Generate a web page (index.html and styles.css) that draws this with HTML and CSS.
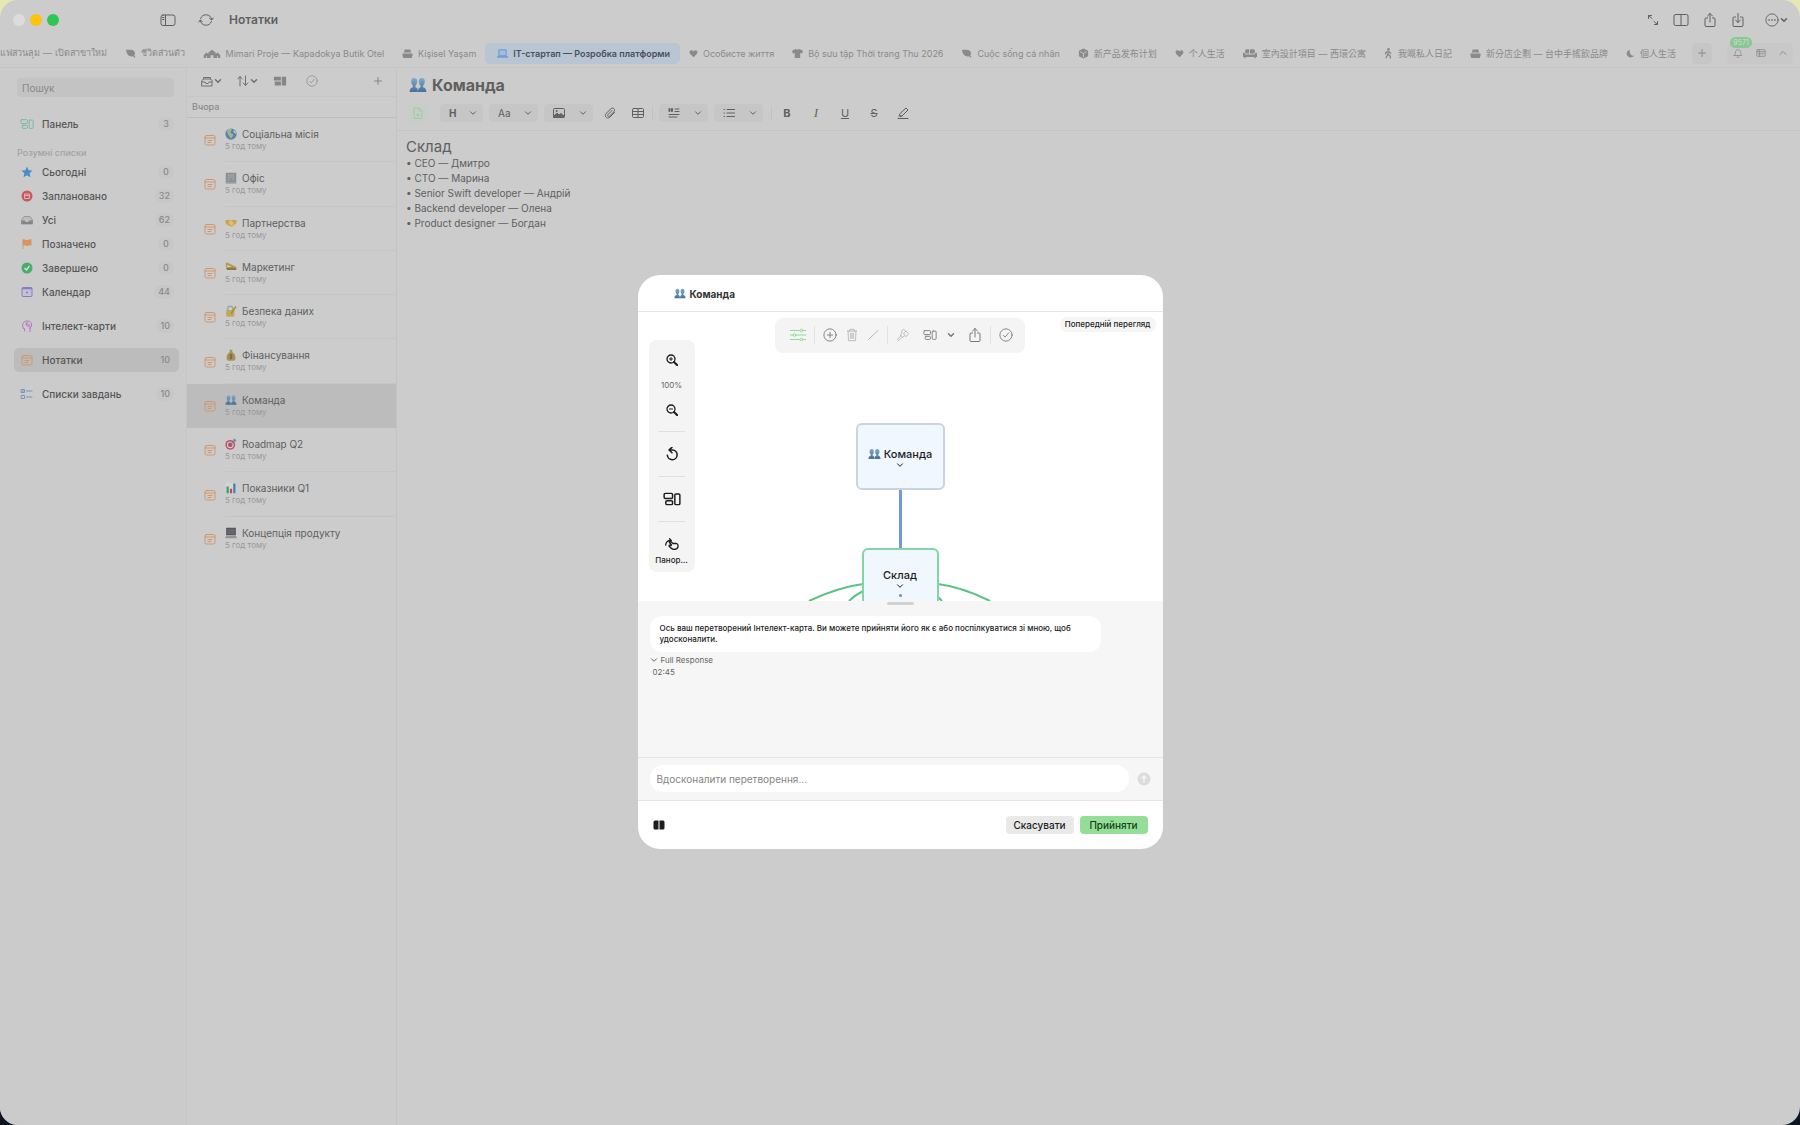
FILE: index.html
```html
<!DOCTYPE html>
<html lang="uk">
<head>
	<meta charset="utf-8">
	<title>Нотатки</title>
	<link rel="stylesheet" href="styles.css">
</head>
<body>
	<svg class="sprite" aria-hidden="true">
		<defs>
			<linearGradient id="bust" x1="0" y1="0" x2="0" y2="1"><stop offset="0" stop-color="#82abc8"/><stop offset="1" stop-color="#45709a"/></linearGradient>
		</defs>
		<symbol id="e-team" viewBox="0 0 18 16"><g fill="url(#bust)"><path d="M5.2 1C3 1 2 2.6 2.2 4.800c.1 1.800.8 3.200 1.700 3.900v1.500C2 10.800.8 11.600.6 15h8.300c0-3.400-.6-4.200-2.500-4.800V8.700c1-.7 1.600-2.100 1.700-3.900C8.300 2.600 7.400 1 5.200 1z"/><path d="M12.800 1c-2.200 0-3.100 1.600-2.900 3.800.1 1.800.7 3.200 1.700 3.900v1.500C9.700 10.800 9.100 11.600 9.100 15h8.300c-.2-3.400-1.400-4.200-3.300-4.800V8.700c.9-.7 1.600-2.100 1.700-3.900C16 2.600 15 1 12.800 1z"/></g></symbol>
		<symbol id="e-globe" viewBox="0 0 16 16"><circle cx="8" cy="8" r="7.500" fill="#5c82ac"/><path d="M3 3.500C5 1 8 1 9 2c0 2-2 2.500-2 4 1 2 4 1 4 3.500-.5 2-2 4-3.500 4C5.500 11 6 10 4 8.500 3 7 3 5 3 3.500z" fill="#a3b58b"/><path d="M11.500 2.500c2 1 3 3 3 5-1.500 0-2-1.500-3-2.500z" fill="#dadbce"/></symbol>
		<symbol id="e-office" viewBox="0 0 16 16"><path fill="#8c9093" d="M1 1h14v14H1z"/><path fill="#a5aaab" d="M4 3h2v2H4zM7 3h2v2H7zM10 3h2v2h-2zM4 6h2v2H4zM7 6h2v2H7zM10 6h2v2h-2zM4 9h2v2H4zM10 9h2v2h-2z"/><path d="M1 14h14v1.500H1z" fill="#a9a9a9"/></symbol>
		<symbol id="e-hands" viewBox="0 0 16 16"><path d="M0 5l4-1.500 4 1 4-1 4 1.500-1.500 4L9 13 5 11.500 1.500 9z" fill="#c9a44e"/><path d="M5 6l3-1.500L11 7l1 2-3 3-4-3z" fill="#e0be65"/></symbol>
		<symbol id="e-mega" viewBox="0 0 16 16"><path d="M1 3l2-1 12 6v2L3 9 1 7z" fill="#b29a55"/><path d="M1 9h14v3H3z" fill="#8b7a4a"/><path d="M3 5l6 3H3z" fill="#dbcf9c"/></symbol>
		<symbol id="e-lock" viewBox="0 0 16 16"><path d="M3.500 8V5a3.500 3.500 0 017 0v2" fill="none" stroke="#9da8a5" stroke-width="2"/><rect x="1.500" y="6.500" width="11" height="9" rx="1.500" fill="#c4a857"/><path d="M14.500 2L8 12" stroke="#a5903e" stroke-width="2"/></symbol>
		<symbol id="e-money" viewBox="0 0 16 16"><path d="M6 1h4L9.500 4C13 6 14 9 14 12c0 2-1 3.500-3 3.500H5c-2 0-3-1.500-3-3.500 0-3 1-6 4.500-8z" fill="#a69259"/><path d="M8 6.500v7M10 8c-3-2-5 1-2 2s1 4-2 2" stroke="#655a38" fill="none"/></symbol>
		<symbol id="e-dart" viewBox="0 0 16 16"><circle cx="7" cy="9" r="6.500" fill="#c15064"/><circle cx="7" cy="9" r="4.500" fill="#d8c9cc"/><circle cx="7" cy="9" r="3" fill="#bb4660"/><path d="M7 9l7-7M12 1v3h3" stroke="#5e8d9a" stroke-width="1.500" fill="none"/></symbol>
		<symbol id="e-chart" viewBox="0 0 16 16"><path d="M1 1h14v14H1z" fill="#d3d6d4"/><path d="M2 6h3v9H2z" fill="#3f9c62"/><path d="M6.500 9h3v6h-3z" fill="#bb4b5a"/><path d="M11 2h3v13h-3z" fill="#447eaa"/></symbol>
		<symbol id="e-laptop" viewBox="0 0 16 16"><path d="M1.500 1h13v10h-13z" fill="#555759"/><path d="M3 2.500h10v7H3z" fill="#66686b"/><path d="M1.500 11.500h13L16 15H0z" fill="#949494"/></symbol>

		<symbol id="i-down" viewBox="0 0 8 8"><path d="M1.500 2.800L4 5.300L6.500 2.800"/></symbol>
		<symbol id="i-up" viewBox="0 0 8 8"><path d="M1 5.500L4 2.500L7 5.500"/></symbol>
		<symbol id="i-plus" viewBox="0 0 8 8"><path d="M4 .5v7M.5 4h7"/></symbol>
		<symbol id="i-panel" viewBox="0 0 16 12"><rect x="1" y="1" width="14" height="10.500" rx="2"/><path d="M5.500 1v10.500M2.500 3.500h1.500M2.500 5.500h1.500"/></symbol>
		<symbol id="i-sync" viewBox="0 0 16 16"><path d="M2.600 6.500A5.800 5.800 0 0113.700 7.500M13.400 9.500A5.800 5.800 0 012.300 8.500M.8 10l1.500-2 2 1.500M15.200 6l-1.500 2-2-1.500"/></symbol>
		<symbol id="i-blocks" viewBox="0 0 16 12"><rect x="1" y="1" width="7.500" height="4.500" rx="1"/><rect x="2.500" y="7.500" width="6" height="3.500" rx="1"/><rect x="10.500" y="1.500" width="4.500" height="9.500" rx="1"/></symbol>
		<symbol id="i-share" viewBox="0 0 14 16"><path d="M4.500 6H3a1 1 0 00-1 1v6.500a1 1 0 001 1h8a1 1 0 001-1V7a1 1 0 00-1-1H9.500M7 10V1.500M4.500 4L7 1.500L9.500 4"/></symbol>
		<symbol id="i-save" viewBox="0 0 14 16"><path d="M4.500 5H3a1 1 0 00-1 1v7.500a1 1 0 001 1h8a1 1 0 001-1V6a1 1 0 00-1-1H9.500M7 1.500V10.500M4.500 8L7 10.500L9.500 8"/></symbol>
		<symbol id="i-check" viewBox="0 0 16 16"><circle cx="8" cy="8" r="7"/><path d="M5 8.500l2 2 4-5"/></symbol>
		<symbol id="i-note" viewBox="0 0 12 12"><rect x="1" y="1.500" width="10" height="9.500" rx="1.500"/><path d="M1 4h10M4 6.500h4M4 8.500h3"/></symbol>
		<symbol id="i-leaf" viewBox="0 0 12 12"><path d="M1 2c4 0 8-.5 9.500 2 1 2 0 3.500-.5 4l1.500 2-1 .5L9 9C5 10 2 8 1 2z"/></symbol>
		<symbol id="i-heart" viewBox="0 0 12 12"><path d="M6 11L2 7C0 5 .5 1.500 3.300 1.500 5 1.500 6 3 6 3s1-1.500 2.700-1.500C11.500 1.500 12 5 10 7z"/></symbol>
		<symbol id="i-cup" viewBox="0 0 12 12"><path d="M3 1.500h6l1 3.500H2zM.5 6h11v2.500l-1 2.500h-9l-1-2.500z"/></symbol>
		<symbol id="i-sofa" viewBox="0 0 16 12"><path d="M2.500 5V2.500c0-1 1-1.500 2-1.500H7v5H3zM8 1h3.500c1 0 2 .5 2 1.500V5L13 6H8zM0 5.500c1.500-1 2.500 0 2.500 1.500h11c0-1.500 1-2.500 2.500-1.500V10h-1.500v1.500H13V10H3v1.500H1.500V10H0z"/></symbol>
	</svg>

	<div class="window">
		<header class="titlebar">
			<div class="lights"><i></i><i></i><i></i></div>
			<button class="bare" aria-label="Бічна панель"><svg class="ic w16"><use href="#i-panel"/></svg></button>
			<button class="bare sync" aria-label="Оновити"><svg class="ic w16 h16"><use href="#i-sync"/></svg></button>
			<h1>Нотатки</h1>
			<div class="title-tools">
				<button class="bare" aria-label="Розгорнути"><svg class="ic w12" viewBox="0 0 12 12"><path d="M1.500 4.500V1.500h3M1.500 1.500L5 4.500M10.500 7.500v3h-3M10.500 10.500L7 7.500"/></svg></button>
				<button class="bare" aria-label="Розділити"><svg class="ic w16" viewBox="0 0 16 12"><rect x="1" y=".5" width="14" height="11" rx="1.500"/><path d="M8 .5v11"/></svg></button>
				<button class="bare" aria-label="Поділитися"><svg class="ic w14 h16"><use href="#i-share"/></svg></button>
				<button class="bare" aria-label="Зберегти"><svg class="ic w14 h16"><use href="#i-save"/></svg></button>
				<button class="bare more" aria-label="Ще"><svg class="ic w14 h14" viewBox="0 0 16 16"><circle cx="8" cy="8" r="7"/><path d="M4.500 8h.5M7.800 8h.5M11 8h.5" stroke-width="1.500"/></svg><svg class="ic w8 bold"><use href="#i-down"/></svg></button>
			</div>
		</header>

		<nav class="tabbar">
			<div class="tabs">
				<a href="#">ร้านกาแฟสวนลุม — เปิดสาขาใหม่</a>
				<a href="#"><svg class="glyph"><use href="#i-leaf"/></svg>ชีวิตส่วนตัว</a>
				<a href="#"><svg class="glyph wide" viewBox="0 0 18 12"><path d="M0 11V7.500L3 5l2 1.500V5l4-3 4 3v1.500L15 5l3 2.500V11h-2.500V9h-1v2h-4V8h-3v3h-4V9h-1v2z"/></svg>Mimari Proje — Kapadokya Butik Otel</a>
				<a href="#"><svg class="glyph"><use href="#i-cup"/></svg>Kişisel Yaşam</a>
				<a href="#" class="active"><svg class="glyph" viewBox="0 0 12 12"><path d="M2 2h8v6.500H2z" fill="#9dbfe6" stroke="#6793cf"/><path d="M0 9h12v1.500H0z"/></svg>IT-стартап — Розробка платформи</a>
				<a href="#"><svg class="glyph slim"><use href="#i-heart"/></svg>Особисте життя</a>
				<a href="#"><svg class="glyph" viewBox="0 0 12 12"><path d="M4 1c1 1 3 1 4 0l4 2-1 3-2-.5V11H3V5.500L1 6 0 3z"/></svg>Bộ sưu tập Thời trang Thu 2026</a>
				<a href="#"><svg class="glyph"><use href="#i-leaf"/></svg>Cuộc sống cá nhân</a>
				<a href="#" lang="zh-CN"><svg class="glyph" viewBox="0 0 12 12"><path d="M6 .5l5 2.500v6l-5 2.500-5-2.500V3z"/><path d="M2.500 4L6 6l3.500-2M6 6v4" stroke="#ccc" fill="none"/></svg>新产品发布计划</a>
				<a href="#" lang="zh-CN"><svg class="glyph slim"><use href="#i-heart"/></svg>个人生活</a>
				<a href="#" lang="zh-TW"><svg class="glyph sofa"><use href="#i-sofa"/></svg>室內設計項目 — 西環公寓</a>
				<a href="#" lang="zh-TW"><svg class="glyph slim" viewBox="2 0 8 12"><circle cx="6" cy="1.500" r="1.500"/><path d="M5 3.500L3 5v2M5.500 3.500V7l-2.500 4M6 7l2 2v2.500M6 4l3 2" stroke="#8a8a8a" stroke-width="1.500" fill="none"/></svg>我嘅私人日記</a>
				<a href="#" lang="zh-TW"><svg class="glyph"><use href="#i-cup"/></svg>新分店企劃 — 台中手搖飲品牌</a>
				<a href="#" lang="zh-TW"><svg class="glyph slim" viewBox="0 0 12 12"><path d="M5 1C1 2 0 6 2 9s6 3 9 0C7 9.500 4 6 5 1zM9 2v3M7.500 3.500h3"/></svg>個人生活</a>
			</div>
			<button class="add" aria-label="Нова вкладка"><svg class="ic w8"><use href="#i-plus"/></svg></button>
			<div class="tab-tools">
				<button class="bare bell" aria-label="Сповіщення"><svg class="ic w10" viewBox="0 0 12 12"><path d="M1.500 9h9C9 7.500 9.500 6 9 4.500 8.500 2.500 7 2 6 2s-2.500.5-3 2.500C2.500 6 3 7.500 1.500 9zM5 11h2"/></svg><span class="badge">9571</span></button>
				<button class="bare" aria-label="Список"><svg class="ic w10" viewBox="0 0 12 12"><rect x="1" y="2" width="10" height="8" rx="1"/><path d="M1 4.500h10M3 7h6M4 2v8"/></svg></button>
				<button class="bare" aria-label="Згорнути"><svg class="ic w8"><use href="#i-up"/></svg></button>
			</div>
		</nav>

		<div class="columns">
			<aside class="sidebar">
				<input class="search" type="search" placeholder="Пошук" aria-label="Пошук">
				<a class="item" href="#"><svg class="ic w16 green"><use href="#i-blocks"/></svg>Панель<b>3</b></a>
				<h2>Розумні списки</h2>
				<a class="item" href="#"><svg class="w12" viewBox="0 0 12 12"><path d="M6 .5l1.600 3.700 4 .4-3 2.700.9 4L6 9.200 2.500 11.300l.9-4-3-2.700 4-.4z" fill="#4c8acb"/></svg>Сьогодні<b>0</b></a>
				<a class="item" href="#"><svg class="w12" viewBox="0 0 12 12"><circle cx="6" cy="6" r="5.500" fill="#ca5660"/><path d="M3.500 4h5v4.500h-5zM3.500 5.500h5" fill="none" stroke="#dfb1b4"/></svg>Заплановано<b>32</b></a>
				<a class="item" href="#"><svg class="w12" viewBox="0 0 12 12"><path d="M3 2.500h6L11.500 6v4H.5V6z" fill="#bdbdbd" stroke="#999"/><path d="M.5 6.500h3.200l.8 1.500h3l.8-1.500h3.200V10H.5z" fill="#858585"/></svg>Усі<b>62</b></a>
				<a class="item" href="#"><svg class="w12" viewBox="0 0 12 12"><path d="M1.500 1.500c2-1 3 .8 5 .5 1.500 0 2.500-1 4-.5v6c-1.500-.5-2.500.5-4 .5-2 0-3-1-4-.5V11h-1z" fill="#d99561"/></svg>Позначено<b>0</b></a>
				<a class="item" href="#"><svg class="w12" viewBox="0 0 12 12"><circle cx="6" cy="6" r="5.500" fill="#4aab6b"/><path d="M3.500 6l2 2 3-4" fill="none" stroke="#d5e4d9" stroke-width="1.300"/></svg>Завершено<b>0</b></a>
				<a class="item" href="#"><svg class="w12" viewBox="0 0 12 12"><rect x="1" y="1.500" width="10" height="9" rx="1" fill="#c4c0dc" stroke="#8580ba"/><path d="M1 2.500h10M5 6.500h2" stroke="#8580ba" stroke-width="1.500"/></svg>Календар<b>44</b></a>
				<a class="item gap" href="#"><svg class="ic w12 violet" viewBox="0 0 12 12"><path d="M3.500 11V8.500H2.200V7L1.500 6C1.500 2.500 3.500 1 6.500 1S11 3 10.500 6c-.2 1-.9 1.500-1.500 2v3.500M4.500 4h1.500v2h2V4M6 1.500V4M9 6v2.500"/></svg>Інтелект-карти<b>10</b></a>
				<a class="item gap on" href="#"><svg class="ic w12 note"><use href="#i-note"/></svg>Нотатки<b>10</b></a>
				<a class="item gap" href="#"><svg class="ic w12 blue" viewBox="0 0 12 12"><rect x=".5" y="1.500" width="3" height="3"/><rect x=".5" y="7.500" width="3" height="3"/><path d="M1.500 3h1M5.500 3H11M5.500 9H11"/></svg>Списки завдань<b>10</b></a>
			</aside>

			<section class="notes">
				<div class="notes-tools">
					<button class="bare pair" aria-label="Сховище"><svg class="ic w12" viewBox="0 0 12 12"><path d="M2.500 4V2.500h7V4M1 5.500L2.500 4h7L11 5.500V11H1zM1 7h3l1 1.500h2L8 7h3"/></svg><svg class="ic w8 bold"><use href="#i-down"/></svg></button>
					<button class="bare pair" aria-label="Сортування"><svg class="ic w12" viewBox="0 0 12 12"><path d="M3 11V1.500M.8 4L3 1.500 5.200 4M8.500 1v9.500M6.300 8l2.200 2.500L10.700 8"/></svg><svg class="ic w8 bold"><use href="#i-down"/></svg></button>
					<button class="bare" aria-label="Вигляд"><svg class="w14" viewBox="0 0 16 12" fill="#868686"><path d="M1 1h8v4.500H1zM2 6.500h7V11H2zM10 1h5v10h-5z"/></svg></button>
					<button class="bare tick" aria-label="Вибрати"><svg class="ic w12 h12"><use href="#i-check"/></svg></button>
					<button class="bare plus" aria-label="Нова нотатка"><svg class="ic w8"><use href="#i-plus"/></svg></button>
				</div>
				<h2>Вчора</h2>
				<ul>
					<li><svg class="ic w12 note"><use href="#i-note"/></svg><div><svg class="emoji"><use href="#e-globe"/></svg>Соціальна місія<small>5 год тому</small></div></li>
					<li><svg class="ic w12 note"><use href="#i-note"/></svg><div><svg class="emoji"><use href="#e-office"/></svg>Офіс<small>5 год тому</small></div></li>
					<li><svg class="ic w12 note"><use href="#i-note"/></svg><div><svg class="emoji"><use href="#e-hands"/></svg>Партнерства<small>5 год тому</small></div></li>
					<li><svg class="ic w12 note"><use href="#i-note"/></svg><div><svg class="emoji"><use href="#e-mega"/></svg>Маркетинг<small>5 год тому</small></div></li>
					<li><svg class="ic w12 note"><use href="#i-note"/></svg><div><svg class="emoji"><use href="#e-lock"/></svg>Безпека даних<small>5 год тому</small></div></li>
					<li><svg class="ic w12 note"><use href="#i-note"/></svg><div><svg class="emoji"><use href="#e-money"/></svg>Фінансування<small>5 год тому</small></div></li>
					<li class="on"><svg class="ic w12 note"><use href="#i-note"/></svg><div><svg class="emoji"><use href="#e-team"/></svg>Команда<small>5 год тому</small></div></li>
					<li><svg class="ic w12 note"><use href="#i-note"/></svg><div><svg class="emoji"><use href="#e-dart"/></svg>Roadmap Q2<small>5 год тому</small></div></li>
					<li><svg class="ic w12 note"><use href="#i-note"/></svg><div><svg class="emoji"><use href="#e-chart"/></svg>Показники Q1<small>5 год тому</small></div></li>
					<li><svg class="ic w12 note"><use href="#i-note"/></svg><div><svg class="emoji"><use href="#e-laptop"/></svg>Концепція продукту<small>5 год тому</small></div></li>
				</ul>
			</section>

			<main class="editor">
				<h2><svg><use href="#e-team"/></svg>Команда</h2>
				<div class="format">
					<button class="doc" aria-label="Документ"><svg class="ic w12" viewBox="0 0 12 12"><path d="M2.500 1h4.500l3 3v7.500H2.500zM7 1v3h3M6 6.500v3.500M4.500 8h3"/></svg></button>
					<button class="drop"><b>H</b><svg class="ic w8"><use href="#i-down"/></svg></button>
					<button class="drop"><span>Aa</span><svg class="ic w8"><use href="#i-down"/></svg></button>
					<button class="drop" aria-label="Зображення"><svg class="ic w12" viewBox="0 0 12 12"><rect x=".5" y="1.500" width="11" height="9" rx="1"/><path d="M1 9l3-3 2 2 2-1.500L11 9v1.500H1z" fill="#666"/><circle cx="3.500" cy="4" r=".5"/></svg><svg class="ic w8"><use href="#i-down"/></svg></button>
					<button class="bare clip" aria-label="Вкладення"><svg class="ic w12" viewBox="0 0 12 12"><path d="M10.500 5.500L6 10C4.500 11.500 2.500 11 1.800 10S1 7.500 2 6.500L7 1.700c1-1 2.300-.7 3 0s.8 2 0 3L5.500 9C4 10 3 8.500 4 7.500l4-4"/></svg></button>
					<button class="bare" aria-label="Таблиця"><svg class="ic w12" viewBox="0 0 12 12"><rect x=".5" y="1.500" width="11" height="9" rx="1"/><path d="M.5 4.500h11M.5 7.500h11M6 1.500v9"/></svg></button>
					<i class="sep"></i>
					<button class="drop" aria-label="Цитата"><svg class="ic w12" viewBox="0 0 12 12"><path d="M1.500 2v2M4 2v2" stroke-width="2"/><path d="M7 2h4M7 4.500h4M1 7.500h10M1 10h8"/></svg><svg class="ic w8"><use href="#i-down"/></svg></button>
					<button class="drop" aria-label="Список"><svg class="ic w12" viewBox="0 0 12 12"><path d="M1 2.500h.5M1 6h.5M1 9.500h.5M4 2.500h8M4 6h8M4 9.500h8"/></svg><svg class="ic w8"><use href="#i-down"/></svg></button>
					<i class="sep"></i>
					<div class="marks">
						<button><b>B</b></button>
						<button class="it">I</button>
						<button><u>U</u></button>
						<button><s>S</s></button>
						<button aria-label="Маркер"><svg class="ic w12" viewBox="0 0 12 12"><path d="M3 9l-.5-2L9 1l2 2-6 6zM1 11.500h10M2 9h3"/></svg></button>
					</div>
				</div>
				<article>
					<h3>Склад</h3>
					<p>• CEO — Дмитро</p>
					<p>• CTO — Марина</p>
					<p>• Senior Swift developer — Андрій</p>
					<p>• Backend developer — Олена</p>
					<p>• Product designer — Богдан</p>
				</article>
			</main>
		</div>
	</div>

	<div class="overlay">
		<div class="modal" role="dialog" aria-label="Команда">
			<h2><svg><use href="#e-team"/></svg>Команда</h2>

			<div class="canvas">
				<svg class="links" viewBox="0 0 525 289">
					<path d="M262.500 177v60" stroke="#7399d0" stroke-width="3"/>
					<path d="M171 289q30-14 54-17M211 289q6-6 14-10M300 272q24 3 52 17M300 285l4 4" stroke="#5dc088" stroke-width="2"/>
				</svg>
				<div class="node root"><span><svg class="em"><use href="#e-team"/></svg>Команда</span><svg class="ic w8"><use href="#i-down"/></svg></div>
				<div class="node child"><span>Склад</span><svg class="ic w8"><use href="#i-down"/></svg><i></i></div>

				<div class="map-tools">
					<button aria-label="Параметри"><svg class="ic w16 h16 lime" viewBox="0 0 16 16"><path d="M0 3.500h10M13 3.500h3M0 8h3M6 8h10M0 12.500h10M13 12.500h3"/><circle cx="11.500" cy="3.500" r="1.300"/><circle cx="4.500" cy="8" r="1.300"/><circle cx="11.500" cy="12.500" r="1.300"/></svg></button>
					<i class="sep"></i>
					<div class="set">
						<button aria-label="Додати"><svg class="ic w14 h14" viewBox="0 0 16 16"><circle cx="8" cy="8" r="7"/><path d="M8 5v6M5 8h6"/></svg></button>
						<button aria-label="Видалити"><svg class="ic w14 h14 dim" viewBox="0 0 16 16"><path d="M2.500 3.500h11M5.500 3.500V1.500h5v2M3.500 3.500l.5 11h8l.5-11M6.500 6v6M8 6v6M9.500 6v6"/></svg></button>
						<button aria-label="Лінія"><svg class="ic w12 dim" viewBox="0 0 12 12"><path d="M1.500 10.500L11 1.500"/></svg></button>
					</div>
					<i class="sep"></i>
					<div class="set far">
						<button aria-label="Пензель"><svg class="ic w14 h14 dim" viewBox="0 0 16 16"><path d="M9 1.500l5.500 5-2.500 3-2.500-.5-2 1.500L5 8l1.500-2L6.500 4zM6 8.500l-4.500 4.500 1.500 1.500L7 10.500M8.500 6.500l1.500 1M11 4L9 6"/></svg></button>
						<button class="pair" aria-label="Макет"><svg class="ic w14"><use href="#i-blocks"/></svg><svg class="ic w8 bold"><use href="#i-down"/></svg></button>
						<button aria-label="Поділитися"><svg class="ic w14 h16"><use href="#i-share"/></svg></button>
					</div>
					<i class="sep"></i>
					<button aria-label="Готово"><svg class="ic w14 h14"><use href="#i-check"/></svg></button>
				</div>

				<span class="pill">Попередній перегляд</span>

				<div class="zoom-tools">
					<button aria-label="Збільшити"><svg class="ic w12" viewBox="0 0 12 12"><circle cx="5" cy="5" r="4"/><path d="M8 8l3.500 3.500" stroke-width="2"/><path d="M3.500 5h3M5 3.500v3" stroke-width="1"/></svg></button>
					<output>100%</output>
					<button aria-label="Зменшити"><svg class="ic w12" viewBox="0 0 12 12"><circle cx="5" cy="5" r="4"/><path d="M8 8l3.500 3.500" stroke-width="2"/><path d="M3.500 5h3" stroke-width="1"/></svg></button>
					<hr>
					<button aria-label="Скинути"><svg class="ic w14 h14" viewBox="0 0 12 12"><path d="M4 2.500h2.500A4.200 4.200 0 112 7M6 .3L3.500 2.500 6 5"/></svg></button>
					<hr>
					<button aria-label="Макет"><svg class="ic w18"><use href="#i-blocks"/></svg></button>
					<hr>
					<button class="pan"><svg class="ic w14" viewBox="0 0 14 12"><path d="M.7 7C.8 4 3 2.300 6 2.500M4.500.8L6.300 2.500 4.600 4M6.500 7L4.500 4.500c-.3-1 .8-1.500 1.500-.8L8 5.500h3.500c1.500.5 1.800 1.500 1.500 3.500-.5 2-2 2.500-4 2.500S6 10.500 4 8c0-1 1-1.300 2-.5"/></svg>Панор…</button>
				</div>
			</div>

			<div class="chat">
				<i class="grip"></i>
				<p class="bubble">Ось ваш перетворений Інтелект-карта. Ви можете прийняти його як є або поспілкуватися зі мною, щоб удосконалити.</p>
				<button class="full"><svg class="ic w8"><use href="#i-down"/></svg>Full Response</button>
				<time>02:45</time>
			</div>

			<form class="prompt">
				<input type="text" placeholder="Вдосконалити перетворення..." aria-label="Вдосконалити перетворення">
				<button type="button" class="bare" aria-label="Надіслати"><svg class="w14 h14" viewBox="0 0 14 14"><circle cx="7" cy="7" r="6.500" fill="#dcdcdc"/><path d="M7 10.500V4M4.500 6.500L7 4l2.500 2.500" fill="none" stroke="#f3f3f3" stroke-width="1.500"/></svg></button>
			</form>

			<footer>
				<button class="bare book" aria-label="Порівняти"><svg class="w12" viewBox="0 0 12 12"><path d="M2 1.500h3.500v9H2a1.500 1.500 0 01-1.500-1.500V3A1.500 1.500 0 012 1.500zM6.500 1.500H10A1.500 1.500 0 0111.500 3v6a1.500 1.500 0 01-1.500 1.500H6.500z" fill="#1d1d1f"/></svg></button>
				<button class="btn">Скасувати</button>
				<button class="btn primary">Прийняти</button>
			</footer>
		</div>
	</div>
</body>
</html>
```
FILE: styles.css
```css
*{
	box-sizing: border-box;
}

body,h1,h2,h3,p,ul,li,hr{
	margin: 0;
	padding: 0;
}

body{
	height: 100vh;
	overflow: hidden;
	background: linear-gradient(#e6e8b4 50%, #0c1520 50%);
	font-family: Inter, "Noto Sans CJK SC", "Noto Sans", sans-serif;
	font-size: 10px;
	color: #606060;
}

[lang="zh-TW"]{
	font-family: Inter, "Noto Sans CJK TC", sans-serif;
}

ul{
	list-style-type: none;
}

a{
	color: inherit;
	text-decoration: none;
}

button,input{
	font: inherit;
	color: inherit;
	border: 0;
	padding: 0;
	background: none;
}

button{
	display: flex;
	align-items: center;
	justify-content: center;
}

.sprite{
	position: absolute;
	width: 0;
	height: 0;
}

/* icons */
.ic{
	fill: none;
	stroke: currentColor;
	stroke-linecap: round;
	stroke-linejoin: round;
	flex: none;
}
.green{ stroke: #74b79c; }
.violet{ stroke: #b279be; }
.blue{ stroke: #7396bd; }
.lime{ stroke: #90dc93; }
.note{ stroke: #d0986a; }
.bold{ stroke-width: 1.5; }
.w8{ width: 8px; height: 8px; }
.w10{ width: 10px; height: 10px; }
.w12{ width: 12px; height: 12px; }
.w14{ width: 14px; height: 12px; }
.w16{ width: 16px; height: 12px; }
.w18{ width: 18px; height: 14px; }
.h12{ height: 12px; }
.h14{ height: 14px; }
.h16{ height: 16px; }

.window{
	height: 100%;
	border-radius: 18px;
	overflow: hidden;
	background: #ccc;
	display: flex;
	flex-direction: column;
}

/* title bar */
.titlebar{
	height: 39px;
	display: flex;
	align-items: center;
	padding: 0 12px 0 13px;
}
.lights{
	display: flex;
	gap: 5px;
	width: 147px;
}
.lights i{
	width: 12px;
	height: 12px;
	border-radius: 50%;
	background: #dcdcdc;
}
.lights i:nth-child(2){ background: #fcc40c; }
.lights i:nth-child(3){ background: #2fc655; }
.sync{
	margin: 0 15px 0 22px;
}
.titlebar h1{
	flex: 1;
	font-size: 12px;
	font-weight: 600;
}
.title-tools{
	display: flex;
	align-items: center;
	gap: 14px;
}
.more{
	margin-left: 6px;
	gap: 1px;
}

/* project tabs */
.tabbar{
	height: 29px;
	display: flex;
	align-items: center;
	border-bottom: 1px solid #c6c6c6;
	padding-right: 7px;
	font-size: 9px;
	color: #8a8a8a;
}
.tabs{
	flex: 1;
	min-width: 0;
	display: flex;
	justify-content: flex-end;
	overflow: hidden;
}
.tabs a{
	flex: none;
	display: flex;
	align-items: center;
	height: 21px;
	padding: 0 9px;
	gap: 5px;
	white-space: nowrap;
}
.tabs .active{
	background: #bac5d3;
	border-radius: 5px;
	color: #47505b;
	font-weight: 600;
	padding: 0 10px 0 12px;
}
.glyph{
	width: 11px;
	height: 11px;
	fill: #8a8a8a;
}
.active .glyph{ fill: #6793cf; }
.wide{ width: 18px; }
.sofa{ width: 14px; }
.slim{ width: 9px; }
.add{
	width: 20px;
	height: 21px;
	margin: 0 15px 0 7px;
	border-radius: 4px;
	background: #c6c6c6;
}
.tab-tools{
	display: flex;
	align-items: center;
	justify-content: space-around;
	width: 66px;
	height: 21px;
	border-radius: 5px;
	background: #c8c8c8;
}
.bell{ position: relative; }
.badge{
	position: absolute;
	left: -3px;
	top: -11px;
	padding: 0 3px;
	border-radius: 6px;
	background: #8cc596;
	color: #c8e2cc;
	font-size: 7px;
	line-height: 11px;
}

.columns{
	flex: 1;
	min-height: 0;
	display: grid;
	grid-template-columns: 187px 210px 1fr;
}

/* sidebar */
.sidebar{
	padding: 10px 7px 0 14px;
	border-right: 1px solid #c6c6c6;
	background: #cbcbcb;
}
.search{
	display: block;
	width: 157px;
	height: 19px;
	margin: 0 0 15px 3px;
	padding: 0 5px;
	border-radius: 4px;
	background: #c3c3c3;
	-webkit-appearance: none;
}
.search::placeholder{ color: #888; }
.item{
	display: flex;
	align-items: center;
	height: 24px;
	padding: 0 5px 0 6px;
	border-radius: 5px;
	color: #565656;
	font-weight: 500;
}
.item svg{
	flex: none;
	width: 14px;
	margin-right: 8px;
}
.item b{
	margin-left: auto;
	min-width: 16px;
	padding: 0 4px;
	border-radius: 7px;
	background: #c7c7c7;
	color: #8a8a8a;
	font-size: 9px;
	font-weight: 500;
	line-height: 14px;
	text-align: center;
}
.item.gap{ margin-top: 10px; }
.item.on,
.item.on b{ background: #bcbcbc; }
.sidebar h2{
	margin: 11px 0 1px 3px;
	font-size: 9px;
	font-weight: 500;
	line-height: 12px;
	color: #a2a2a2;
}

/* note list */
.notes{
	border-right: 1px solid #c4c4c4;
}
.notes-tools{
	display: flex;
	align-items: center;
	height: 29px;
	padding: 0 14px 2px;
	border-bottom: 1px solid #c6c6c6;
	color: #707070;
}
.pair{ gap: 1px; }
.notes-tools .pair{ margin-right: 15px; }
.tick{
	margin-left: 19px;
	color: #8e8e8e;
}
.plus{
	margin-left: auto;
	color: #858585;
}
.notes h2{
	height: 21px;
	padding-left: 5px;
	border-bottom: 1px solid #bdbdbd;
	font-size: 9px;
	font-weight: 500;
	line-height: 20px;
	color: #8a8a8a;
}
.notes ul{
	display: grid;
	grid-template-rows: repeat(10, 1fr);
	height: 443px;
}
.notes li{
	display: flex;
	align-items: center;
	padding-left: 17px;
	gap: 9px;
}
.notes li > div{
	flex: 1;
	align-self: stretch;
	padding-top: 9px;
	border-bottom: 1px solid #c5c5c5;
	line-height: 15px;
}
.notes li.on{ background: #bcbcbc; }
.notes li.on > div,
.notes li:last-child > div{ border-color: transparent; }
.emoji{
	width: 12px;
	height: 12px;
	margin-right: 5px;
	vertical-align: -2px;
}
.notes small{
	display: block;
	font-size: 8px;
	line-height: 9px;
	color: #999;
}

/* editor */
.editor h2{
	display: flex;
	align-items: center;
	gap: 5px;
	height: 34px;
	padding-left: 12px;
	font-size: 16px;
	font-weight: 700;
}
.editor h2 svg{
	width: 18px;
	height: 16px;
}
.format{
	display: flex;
	align-items: center;
	height: 29px;
	padding: 0 0 6px 10px;
	border-bottom: 1px solid #c4c4c4;
	gap: 6px;
}
.doc{
	width: 21px;
	height: 19px;
	margin-right: 6px;
	border-radius: 4px;
	background: #c7cdc7;
	color: #9fcca0;
}
.drop{
	justify-content: space-between;
	width: 49px;
	height: 18px;
	padding: 0 6px 0 9px;
	border-radius: 4px;
	background: #c6c6c6;
}
.doc + .drop{ width: 43px; }
.clip{ margin: 0 10px 0 5px; }
.sep{
	width: 1px;
	height: 14px;
	background: #c2c2c2;
}
.format .sep{ margin-left: 2px; }
.marks{
	display: flex;
	gap: 17px;
	padding-left: 3px;
}
.marks button{
	width: 12px;
	font-size: 11px;
}
.marks .it{
	font-family: "Liberation Serif", serif;
	font-style: italic;
	font-size: 12px;
}
.editor article{ padding: 6px 9px; }
.editor h3{
	font-size: 15px;
	font-weight: 400;
	line-height: 19px;
}
.editor p{ line-height: 15px; }

/* dialog */
.overlay{
	position: fixed;
	inset: 0;
	display: flex;
	align-items: center;
	justify-content: center;
	padding-bottom: 2px;
}
.modal{
	width: 525px;
	max-width: 100%;
	border-radius: 22px;
	overflow: hidden;
	background: #fff;
	color: #1d1d1f;
}
.modal h2{
	display: flex;
	align-items: center;
	gap: 4px;
	height: 37px;
	padding: 2px 0 0 36px;
	border-bottom: 1px solid #e4e4e4;
	font-size: 10px;
	font-weight: 700;
	color: #333;
}
.modal h2 svg{
	width: 12px;
	height: 11px;
}
.canvas{
	position: relative;
	height: 289px;
	overflow: hidden;
}
.links{
	position: absolute;
	inset: 0;
	fill: none;
}
.node{
	position: absolute;
	display: flex;
	flex-direction: column;
	align-items: center;
	border: 2px solid #c9d3e2;
	border-radius: 6px;
	background: #f0f7ff;
	font-size: 11px;
	font-weight: 500;
	line-height: 14px;
}
.root{
	left: 218px;
	top: 111px;
	width: 89px;
	height: 67px;
	padding-top: 22px;
}
.child{
	left: 224px;
	top: 236px;
	width: 77px;
	height: 67px;
	padding-top: 18px;
	border-color: #83d6a4;
}
.node i{
	width: 3px;
	height: 3px;
	margin-top: 4px;
	border-radius: 50%;
	background: #6690c8;
}
.em{
	width: 13px;
	height: 12px;
	margin-right: 3px;
	vertical-align: -2px;
}
.map-tools{
	position: absolute;
	left: 137px;
	top: 6px;
	width: 250px;
	height: 35px;
	display: flex;
	align-items: center;
	justify-content: space-between;
	padding: 0 12px 0 15px;
	border-radius: 8px;
	background: #f4f4f4;
	color: #777;
}
.map-tools .sep{
	height: 18px;
	background: #e2e2e2;
}
.map-tools .pair{ gap: 10px; }
.set{
	display: flex;
	align-items: center;
	gap: 8px;
}
.set.far{ gap: 13px; }
.dim{ color: #b5b5b5; }
.pill{
	position: absolute;
	right: 7px;
	top: 5px;
	padding: 0 5px;
	border-radius: 7px;
	background: #f5f5f5;
	font-size: 8px;
	font-weight: 500;
	line-height: 15px;
}
.zoom-tools{
	position: absolute;
	left: 11px;
	top: 28px;
	width: 46px;
	height: 232px;
	display: flex;
	flex-direction: column;
	align-items: center;
	justify-content: space-between;
	padding: 14px 0 7px;
	border-radius: 8px;
	background: #f4f4f4;
}
.zoom-tools .ic{ stroke-width: 1.3; }
.zoom-tools output{
	font-size: 8px;
	line-height: 8px;
	color: #666;
}
.zoom-tools hr{
	width: 27px;
	border: 0;
	border-top: 1px solid #e0e0e0;
}
.pan{
	flex-direction: column;
	gap: 5px;
	font-size: 8px;
	font-weight: 500;
}
.chat{
	height: 157px;
	padding: 1px 12px 0;
	border-bottom: 1px solid #e4e4e4;
	background: #f6f6f6;
	font-size: 8px;
	color: #666;
}
.grip{
	display: block;
	width: 27px;
	height: 3px;
	margin: 0 auto 11px;
	border-radius: 2px;
	background: #d2d2d2;
}
.bubble{
	width: 451px;
	max-width: 100%;
	padding: 7px 10px;
	border-radius: 12px;
	background: #fff;
	color: #222;
	font-weight: 500;
	line-height: 11px;
}
.full{
	gap: 3px;
	margin: 2px 0 1px;
	line-height: 12px;
}
.chat time{ padding-left: 3px; }
.prompt{
	display: flex;
	align-items: center;
	gap: 8px;
	height: 43px;
	padding: 0 12px;
	border-bottom: 1px solid #e4e4e4;
	background: #f6f6f6;
}
.prompt input{
	flex: 1;
	height: 27px;
	padding: 0 7px;
	border-radius: 13px;
	background: #fff;
}
.prompt input::placeholder{ color: #858585; }
.modal footer{
	display: flex;
	align-items: center;
	gap: 6px;
	height: 48px;
	padding: 0 15px;
}
.book{ margin-right: auto; }
.btn{
	width: 68px;
	height: 18px;
	border-radius: 4px;
	background: #e9e9e9;
	font-weight: 500;
}
.primary{
	background: #95de97;
	color: #17401a;
}
```
